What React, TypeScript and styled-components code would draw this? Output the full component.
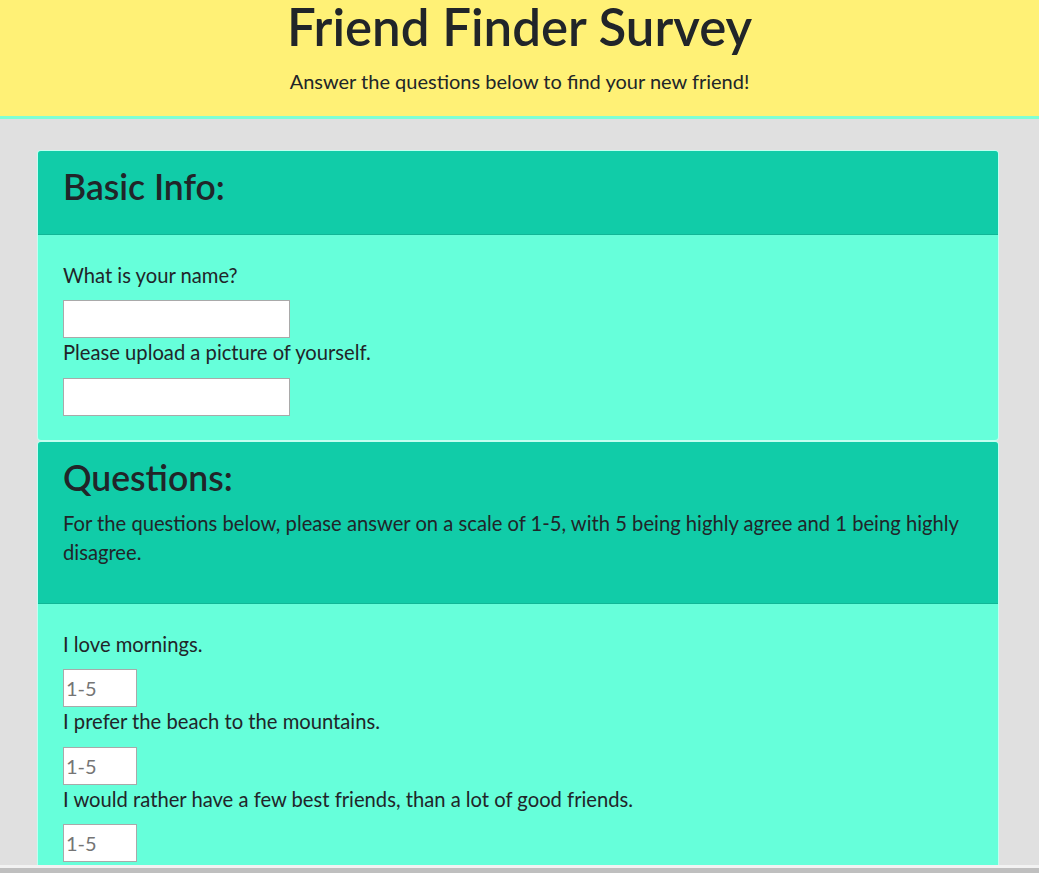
import React from "react";
import styled, { createGlobalStyle } from "styled-components";

const Global = createGlobalStyle`
  html, body { margin: 0; padding: 0; }
  body {
    background: #e0e0e0;
    font-family: Lato, "Open Sans", "Liberation Sans", sans-serif;
    color: #212529;
  }
  * { box-sizing: border-box; }
`;

const Jumbotron = styled.header`
  background: #fff176;
  border-bottom: 3px solid #7fffd4;
  padding: 4px 0 20px;
  text-align: center;
`;

const Title = styled.h1`
  margin: 0;
  font-size: 51px;
  line-height: 46px;
  font-weight: 600;
  color: #212529;
`;

const Lead = styled.p`
  margin: 16px 0 0;
  font-size: 20px;
  line-height: 30px;
  font-weight: 400;
`;

const Main = styled.main`
  padding: 31px 40px 0 37px;
`;

const Card = styled.section`
  border: 1px solid rgba(255, 255, 255, 0.6);
  border-radius: 4px;
  overflow: hidden;
  background: #66ffda;
`;

const CardHeader = styled.div`
  background: #11cca8;
  border-bottom: 1px solid rgba(0, 0, 0, 0.1);
  padding: 16px 25px;
`;

const SectionTitle = styled.h2`
  margin: 0 0 10px;
  font-size: 35.5px;
  line-height: 40.8px;
  font-weight: 600;
`;

const Intro = styled.p`
  margin: 0 0 20px;
  font-size: 20.2px;
  line-height: 29px;
`;

const CardBody = styled.div`
  padding: 26px 25px 24px;
  display: flex;
  flex-direction: column;
  align-items: flex-start;
`;

const Label = styled.label`
  display: block;
  font-size: 20.2px;
  line-height: 29.5px;
  margin-bottom: 10px;
`;

const Input = styled.input<{ $w: number }>`
  display: block;
  width: ${(p) => p.$w}px;
  height: 38px;
  border: 1px solid #a9a9a9;
  background: #fff;
  padding: 1px 2px;
  font-family: inherit;
  font-size: 20px;
  color: #212529;
  outline: none;
  &::placeholder { color: #757575; }
`;

const BottomBar = styled.div`
  position: fixed;
  left: 0;
  right: 0;
  bottom: 0;
  height: 8px;
  border-top: 3px solid #f2f2f2;
  background: #bfbfbf;
`;

const questions = [
  "I love mornings.",
  "I prefer the beach to the mountains.",
  "I would rather have a few best friends, than a lot of good friends.",
];

export default function App() {
  return (
    <>
      <Global />
      <Jumbotron>
        <Title>Friend Finder Survey</Title>
        <Lead>Answer the questions below to find your new friend!</Lead>
      </Jumbotron>
      <Main>
        <Card>
          <CardHeader>
            <SectionTitle>Basic Info:</SectionTitle>
          </CardHeader>
          <CardBody>
            <Label htmlFor="name">What is your name?</Label>
            <Input id="name" type="text" $w={227} />
            <Label htmlFor="photo">Please upload a picture of yourself.</Label>
            <Input id="photo" type="text" $w={227} />
          </CardBody>
        </Card>
        <Card>
          <CardHeader>
            <SectionTitle>Questions:</SectionTitle>
            <Intro>
              For the questions below, please answer on a scale of 1-5, with 5 being highly agree
              and 1 being highly disagree.
            </Intro>
          </CardHeader>
          <CardBody>
            {questions.map((q, i) => (
              <React.Fragment key={i}>
                <Label htmlFor={`q${i}`}>{q}</Label>
                <Input id={`q${i}`} type="text" placeholder="1-5" $w={74} />
              </React.Fragment>
            ))}
          </CardBody>
        </Card>
      </Main>
      <BottomBar />
    </>
  );
}
